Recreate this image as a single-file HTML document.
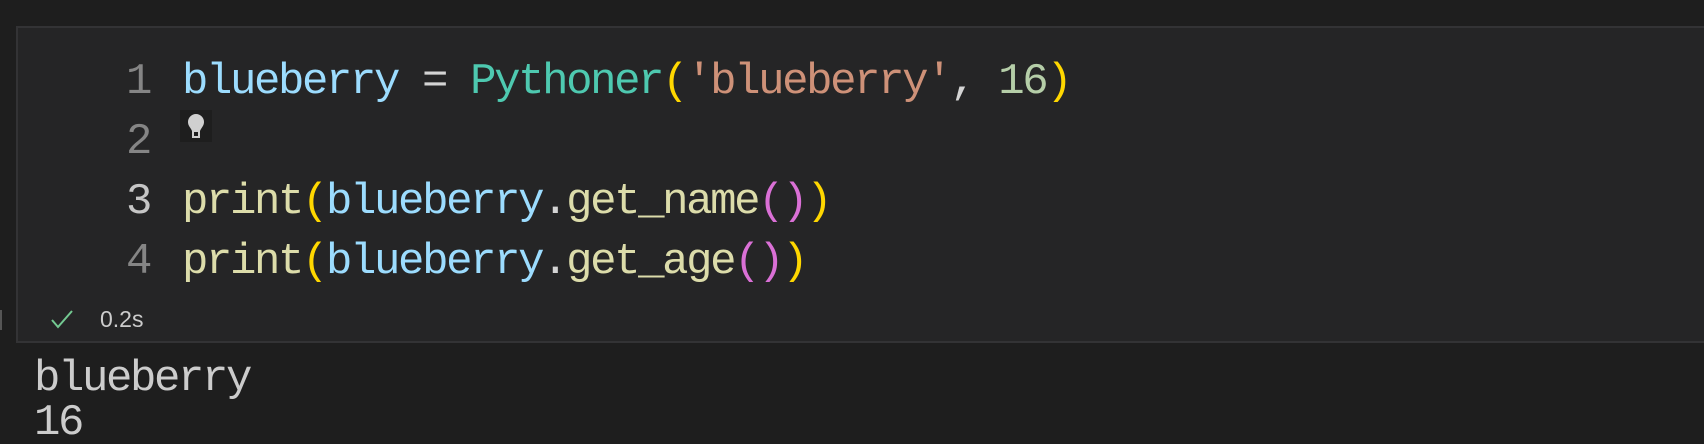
<!DOCTYPE html>
<html><head><style>
html,body{margin:0;padding:0;width:1704px;height:444px;background:#1e1e1e;overflow:hidden;position:relative}
.cell{position:absolute;left:16px;top:26px;width:1700px;height:313px;background:#252526;border:2px solid #333335}
.code{position:absolute;font-family:"Liberation Mono",monospace;font-size:44px;letter-spacing:-2.4px;white-space:pre;line-height:60px}
.ln{position:absolute;left:110px;width:40px;text-align:right;color:#858585;font-family:"Liberation Mono",monospace;font-size:44px;letter-spacing:-2.4px;line-height:60px}
.v{color:#9cdcfe}.c{color:#4ec9b0}.s{color:#ce9178}.n{color:#b5cea8}.g{color:#ffd700}.p{color:#da70d6}.f{color:#dcdcaa}.o{color:#d4d4d4}
</style></head><body>
<div class="cell"></div>
<div class="ln" style="top:52px">1</div>
<div class="ln" style="top:112px">2</div>
<div class="ln" style="top:172px;color:#c6c6c6">3</div>
<div class="ln" style="top:232px">4</div>
<div class="code" style="left:182px;top:52px"><span class="v">blueberry</span><span class="o"> = </span><span class="c">Pythoner</span><span class="g">(</span><span class="s">'blueberry'</span><span class="o">, </span><span class="n">16</span><span class="g">)</span></div>
<div style="position:absolute;left:180px;top:110px;width:32px;height:32px;background:#1e1e1e"></div>
<svg style="position:absolute;left:184px;top:112px" width="24" height="28" viewBox="0 0 24 28"><path d="M12 2a8 8 0 0 0-8 8c0 4 3 6 4 9h8c1-3 4-5 4-9a8 8 0 0 0-8-8z" fill="#d0d0d0"/><rect x="8" y="19" width="8" height="7" fill="#d0d0d0"/><rect x="10" y="20" width="4" height="4" fill="#1e1e1e"/></svg>
<div class="code" style="left:182px;top:172px"><span class="f">print</span><span class="g">(</span><span class="v">blueberry</span><span class="o">.</span><span class="f">get_name</span><span class="p">()</span><span class="g">)</span></div>
<div class="code" style="left:182px;top:232px"><span class="f">print</span><span class="g">(</span><span class="v">blueberry</span><span class="o">.</span><span class="f">get_age</span><span class="p">()</span><span class="g">)</span></div>
<div style="position:absolute;left:0;top:310px;width:2px;height:20px;background:#555"></div>
<svg style="position:absolute;left:50px;top:309px" width="24" height="20" viewBox="0 0 24 20"><path d="M2 11l6 7L22 2" fill="none" stroke="#73c991" stroke-width="2"/></svg>
<div style="position:absolute;left:100px;top:305px;font-family:'Liberation Sans',sans-serif;font-size:23px;color:#cccccc;line-height:28px">0.2s</div>
<div class="code" style="left:34px;top:357px;color:#cccccc;line-height:44px">blueberry
16</div>
</body></html>
